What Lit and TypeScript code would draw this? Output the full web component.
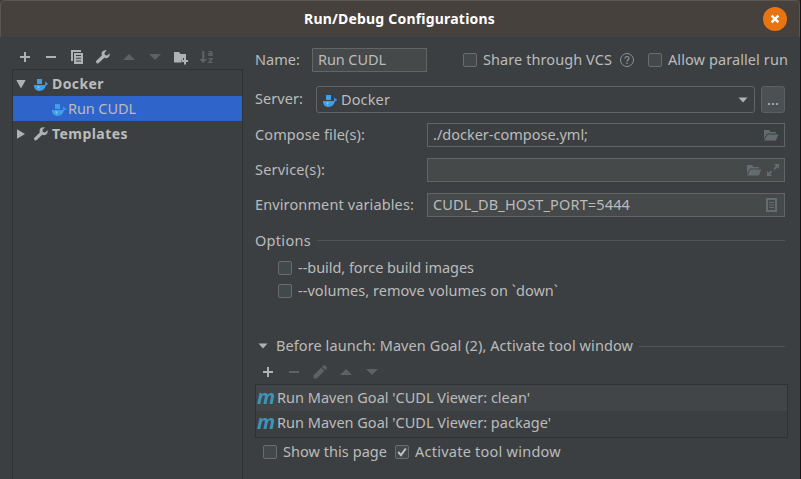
import { LitElement, html, svg, css, nothing } from "lit";
import { customElement, property } from "lit/decorators.js";

/** Single line of text whose tracking is tuned so that it fills `w` pixels. */
@customElement("fit-text")
class FitText extends LitElement {
  @property() text = "";
  @property({ type: Number }) w = 0;
  static styles = css`
    :host { display: block; flex: none; white-space: pre; line-height: 20px; height: 20px; }
    span { display: inline-block; }
  `;
  render() {
    return html`<span>${this.text}</span>`;
  }
  updated() {
    const span = this.renderRoot.querySelector("span")!;
    span.style.letterSpacing = "0px";
    const natural = span.getBoundingClientRect().width;
    const n = this.text.length;
    span.style.letterSpacing = `${(this.w - natural) / n}px`;
    this.style.width = `${this.w}px`;
  }
}

const icons: Record<string, unknown> = {
  plus: svg`<path d="M7 3h2v4h4v2H9v4H7V9H3V7h4z"/>`,
  minus: svg`<path d="M3 7h10v2H3z"/>`,
  copy: svg`<path d="M2 1h10v2H4v9H2z"/><path fill-rule="evenodd" d="M5 4h9v11H5zM7 6v1h5V6zM7 8.700v1h5v-1zM7 11.500v1h5v-1z"/>`,
  wrench: svg`<path d="M14.5 4.2 12.2 6.500 9.900 6 9.500 3.800 11.800 1.500C9.800.8 7.600 1.600 6.800 3.500 6.400 4.500 6.500 5.500 6.800 6.400L1.300 11.800C.8 12.500 1 13.300 1.500 13.900 2.200 14.600 3.200 14.600 3.800 14L9.300 8.800C10.500 9.400 12 9.300 13.200 8.400 14.600 7.300 15 5.600 14.500 4.200z"/>`,
  up: svg`<path d="M2 11 8 5l6 6z"/>`,
  down: svg`<path d="M2 5h12l-6 6z"/>`,
  folderPlus: svg`<path d="M1 3h5l1.500 2H13v4h-3v2H8.500v2.500H1z"/><path d="M11 9h2v2h2v2h-2v2.500h-2V13H9v-2h2z"/>`,
  sort: svg`<path d="M3.200 2h2v8h3l-4 4-4-4h3z"/><path fill="none" stroke="currentColor" stroke-width="1.400" d="M9.500 2.600H12q1 0 1 1V7M13 4.500h-2.500q-1 0-1 .9t1 1H13M9.500 9.600h3.700L9.900 13.400h3.700"/>`,
  docker: svg`<path d="M4 2h5v5H4z"/><path d="M1 8h10.500c.8-.2 1-.8.700-1.500L12 4.500c1 .4 1.400 1 1.600 1.800H15c0 1.200-.8 1.900-2 2C12 12 9.800 14 6.500 14 3 14 1 11.700 1 8z"/><path d="M4.200 9.500h2.500L5.500 12z" fill="#a8c4dc"/>`,
  folder: svg`<path d="M1 3h5l1.500 2H13v1.500H4L1 12z"/><path d="M4.500 7.500H15.500L12.800 13.500H1.200z"/>`,
  expand: svg`<path d="M9 2h5v5l-1.700-1.700L9.500 8 8.200 6.800l2.700-2.900zM2 9l1.700 1.700L6 8.400l1.300 1.200L5.200 12.200 7 14H2z"/>`,
  doc: svg`<path fill-rule="evenodd" d="M3 1h11v14H3zM5 3v10h7V3z"/><path d="M6 5h5v1H6zM6 7.500h5v1H6zM6 10h5v1H6z"/>`,
  pencil: svg`<path d="M1.500 14.500v-3.200l7.600-7.500 3.200 3.200-7.600 7.500zM10 2.900l1.500-1.500q.8-.8 1.600 0L14.600 3q.8.8 0 1.600L13.200 6z"/>`,
  caret: svg`<path d="M3.500 5.500h9L8 10.500z"/>`,
  treeOpen: svg`<path d="M3.300 4h9.400L8 12.500z"/>`,
  treeClosed: svg`<path d="M4 3.300v9.400L12 8z"/>`,
  help: svg`<circle cx="8" cy="8" r="6.500" fill="none" stroke="currentColor" stroke-width="1"/><path fill="none" stroke="currentColor" stroke-width="1.200" d="M6 6.500C6 3.800 10 3.900 10 6.300 10 7.700 8 7.700 8 9.500M8 10.600v1.400"/>`,
  close: svg`<path d="M4.600 4.600l6.800 6.800M11.400 4.600l-6.800 6.800" fill="none" stroke="currentColor" stroke-width="2.400"/>`,
  check: svg`<path d="M4.200 8 7 11.200 11.800 4.500" fill="none" stroke="currentColor" stroke-width="2"/>`,
};

const icon = (name: string, cls = "") =>
  html`<svg class="icon ${cls}" viewBox="0 0 16 16" width="16" height="16">${icons[name]}</svg>`;
const text = (value: string, w: number, cls = "") =>
  html`<fit-text class=${cls} .text=${value} .w=${w}></fit-text>`;
const box = (checked = false) =>
  html`<span class="box">${checked ? icon("check", "tick") : nothing}</span>`;

@customElement("app-root")
class AppRoot extends LitElement {
  static styles = css`
    :host {
      display: block; width: 801px; height: 479px; overflow: hidden;
      font: 14.5px "Noto Sans", "Open Sans", sans-serif; color: #bbbbbb; background: #151515;
    }
    * { box-sizing: border-box; }
    .window { width: 800px; height: 479px; background: #3c3f41; display: flex; flex-direction: column; }
    .title {
      height: 37px; flex: none; display: grid; grid-template-columns: 1fr auto 1fr; align-items: center;
      background: #46413d; border: 1px solid #5a5652; border-bottom: 0; border-radius: 5px 5px 0 0;
      color: #fff; font-weight: 700; font-size: 14px; padding: 0 12px 0 11px;
    }
    .close {
      grid-column: 3; justify-self: end; width: 24px; height: 24px; border-radius: 50%; background: #e97412;
      display: flex; align-items: center; justify-content: center; margin-bottom: 1px;
    }
    .icon { display: block; flex: none; fill: currentColor; color: #afb1b3; }
    .icon.x { color: #fff; }
    .name { grid-column: 2; }
    .body { flex: 1; min-height: 0; display: flex; }
    .icon.off { color: #5f6162; }
    .icon.blue { color: #3aa0ee; margin-top: 2px; }
    .icon.field { color: #656c70; }
    .side { width: 231px; margin-left: 12px; flex: none; display: flex; flex-direction: column; }
    .tools { display: flex; gap: 10px; align-items: center; height: 32px; padding: 8px 0 0 5px; }
    .tree { flex: 1; border: 1px solid #2f3133; border-bottom: 0; padding-top: 1px; }
    .node { height: 25px; display: flex; align-items: center; }
    .node.bold { font-weight: 700; font-size: 14px; }
    .node .arrow { margin-right: 4px; }
    .node.bold fit-text { margin-left: 3px; }
    .node.sel { background: #2f65ca; padding-left: 38px; }
    .node.sel fit-text { margin: 0 0 2px 1px; }
    .main { flex: 1; padding: 0 12px; display: flex; flex-direction: column; min-width: 0; }
    .row { display: flex; align-items: center; flex: none; }
    .main fit-text { margin-bottom: 2px; }
    .r1 { height: 24px; margin-top: 11px; }
    .input {
      height: 24px; border: 1px solid #646464; background: #45494a; display: flex; align-items: center;
      padding: 0 5px; flex: none;
    }
    .input.plain { background: #3c3f41; }
    .input.short { width: 115px; margin-left: 12px; }
    .input.long { width: 358px; margin-left: auto; }
    .input.two { padding-right: 3px; gap: 3px; }
    .fieldrow { margin-right: 3px; margin-bottom: 11px; height: 24px; }
    .push { margin-left: auto; }
    .box { width: 14px; height: 14px; flex: none; border: 1px solid #6b6b6b; border-radius: 2px; background: #43494a; display: flex; }
    .tick { margin: -2px; color: #c0c0c0; }
    .box + fit-text { margin-left: 6px; }
    .vcs { margin-left: 36px; display: flex; align-items: center; }
    .vcs .icon { margin: 0 13px 0 7px; color: #8f9294; }
    .r2 { height: 27px; margin: 14px 3px 10px 0; }
    .main .r2 .lift { margin-bottom: 4px; }
    .combo {
      width: 439px; height: 27px; margin-left: 13px; border: 1px solid #646464; border-radius: 3px;
      display: flex; align-items: center; padding: 1px 3px 0 5px; gap: 3px;
    }
    .more {
      width: 24px; height: 27px; margin-left: auto; border: 1px solid #5e6060; border-radius: 3px; background: #4c5052;
      display: flex; align-items: center; justify-content: center;
    }
    .rule { flex: 1; height: 1px; background: #515355; margin-left: 6px; }
    .head { height: 20px; margin-right: 3px; }
    .options { margin-top: 3px; }
    .options .rule { margin-bottom: 1px; }
    .opt { height: 23px; padding-left: 23px; }
    .opt.first { margin-top: 5px; }
    .before { margin-top: 34px; }
    .before .caret { margin-right: 5px; }
    .list { border: 1px solid #2f3133; height: 54px; flex: none; width: 533px; }
    .goal { height: 26px; display: flex; align-items: center; padding-left: 1px; gap: 4px; }
    .goal:first-child { background: #414547; }
    .goal:last-child { padding-bottom: 2px; }
    .m { width: 16px; font: italic 700 20px/18px "Open Sans", sans-serif; color: #3e94b4; margin-top: -3px; letter-spacing: -1px; }
    .foot { height: 20px; margin-top: 4px; padding-left: 8px; }
    .foot .second { margin-left: 8px; display: flex; align-items: center; }
    .main .tools { padding: 4px 0 0 5px; height: 28px; }
  `;

  render() {
    return html`
      <div class="window">
        <div class="title">
          ${text("Run/Debug Configurations", 191, "name")}
          <span class="close">${icon("close", "x")}</span>
        </div>
        <div class="body">
          <div class="side">
            <div class="tools">
              ${icon("plus")}${icon("minus")}${icon("copy")}${icon("wrench")}
              ${icon("up", "off")}${icon("down", "off")}${icon("folderPlus")}${icon("sort", "off")}
            </div>
            <div class="tree">
              <div class="node bold">${icon("treeOpen", "arrow")}${icon("docker", "blue")}${text("Docker", 52)}</div>
              <div class="node sel">${icon("docker", "blue")}${text("Run CUDL", 68)}</div>
              <div class="node bold">${icon("treeClosed", "arrow")}${icon("wrench")}${text("Templates", 76)}</div>
            </div>
          </div>
          <div class="main">
            <div class="row r1">
              ${text("Name:", 45)}
              <div class="input short">${text("Run CUDL", 68)}</div>
              <div class="vcs">${box()}${text("Share through VCS", 129)}${icon("help")}</div>
              ${box()}${text("Allow parallel run", 120)}
            </div>
            <div class="row r2">
              ${text("Server:", 48, "lift")}
              <div class="combo">${icon("docker", "blue")}${text("Docker", 49)}${icon("caret", "push")}</div>
              <div class="more">${text("...", 12)}</div>
            </div>
            <div class="row fieldrow">
              ${text("Compose file(s):", 110)}
              <div class="input long plain">${text("./docker-compose.yml;", 155)}${icon("folder", "field push")}</div>
            </div>
            <div class="row fieldrow">
              ${text("Service(s):", 70)}
              <div class="input long two">${icon("folder", "field push")}${icon("expand", "field")}</div>
            </div>
            <div class="row fieldrow">
              ${text("Environment variables:", 159)}
              <div class="input long">${text("CUDL_DB_HOST_PORT=5444", 197)}${icon("doc", "field push")}</div>
            </div>
            <div class="row head options">${text("Options", 56)}<span class="rule"></span></div>
            <div class="row opt first">${box()}${text("--build, force build images", 176)}</div>
            <div class="row opt">${box()}${text("--volumes, remove volumes on `down`", 260)}</div>
            <div class="row head before">${icon("caret", "caret")}${text("Before launch: Maven Goal (2), Activate tool window", 357)}<span class="rule"></span></div>
            <div class="tools">
              ${icon("plus")}${icon("minus", "off")}${icon("pencil", "off")}${icon("up", "off")}${icon("down", "off")}
            </div>
            <div class="list">
              <div class="goal"><span class="m">m</span>${text("Run Maven Goal 'CUDL Viewer: clean'", 253)}</div>
              <div class="goal"><span class="m">m</span>${text("Run Maven Goal 'CUDL Viewer: package'", 274)}</div>
            </div>
            <div class="row foot">
              ${box()}${text("Show this page", 104)}
              <div class="second">${box(true)}${text("Activate tool window", 146)}</div>
            </div>
          </div>
        </div>
      </div>
    `;
  }
}
